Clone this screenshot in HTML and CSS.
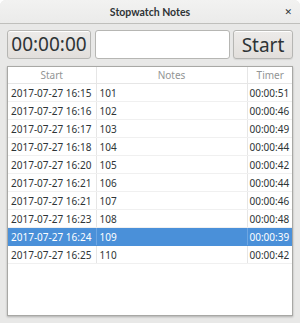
FILE: index.html
```html
<!DOCTYPE html>
<html lang="en">
<head>
  <meta charset="UTF-8" />
  <title>Stopwatch Notes</title>
  <link rel="stylesheet" href="styles.css">
</head>
<body>
  <div class="window">
    <div class="titlebar">
      <span class="title">Stopwatch Notes</span>
      <span class="close">&#x2715;</span>
    </div>

    <div class="toolbar">
      <div class="clock">00:00:00</div>
      <input class="note" type="text">
      <button class="start">Start</button>
    </div>

    <div class="list">
      <table id="notesTable">
        <colgroup>
          <col class="c-start">
          <col class="c-notes">
          <col class="c-timer">
        </colgroup>
        <thead>
          <tr><th>Start</th><th>Notes</th><th>Timer</th></tr>
        </thead>
        <tbody></tbody>
      </table>
    </div>
  </div>

  <script>
    const rows = [
      ['16:15', '101', '00:00:51'],
      ['16:16', '102', '00:00:46'],
      ['16:17', '103', '00:00:49'],
      ['16:18', '104', '00:00:44'],
      ['16:20', '105', '00:00:42'],
      ['16:21', '106', '00:00:44'],
      ['16:21', '107', '00:00:46'],
      ['16:23', '108', '00:00:48'],
      ['16:24', '109', '00:00:39'],
      ['16:25', '110', '00:00:42']
    ];

    const body = document.querySelector('#notesTable tbody');
    rows.forEach((r, i) => {
      const tr = document.createElement('tr');
      if (i === 8) tr.className = 'selected';
      [`2017-07-27 ${r[0]}`, r[1], r[2]].forEach(text => {
        const td = document.createElement('td');
        td.textContent = text;
        tr.appendChild(td);
      });
      body.appendChild(tr);
    });
  </script>
</body>
</html>
```

FILE: styles.css
```css
html, body {
  margin: 0;
  padding: 0;
  background: #fff;
}

body {
  font-family: "Noto Sans", "DejaVu Sans", sans-serif;
  color: #2e3436;
  width: 300px;
  height: 323px;
  overflow: hidden;
}

.window {
  display: flex;
  flex-direction: column;
  height: 323px;
  background: #e8e8e7;
  border-radius: 6px 6px 0 0;
  overflow: hidden;
}

.titlebar {
  height: 23px;
  flex: none;
  display: flex;
  align-items: center;
  justify-content: center;
  position: relative;
  background: linear-gradient(#f2f2f1, #ebebea);
  border-bottom: 1px solid #bfbfbc;
}

.title {
  font-family: Lato, "Noto Sans", sans-serif;
  font-size: 10.5px;
  font-weight: bold;
  color: #2e3436;
}

.close {
  position: absolute;
  right: 8px;
  top: 5px;
  font-size: 9px;
  font-weight: bold;
  color: #2e3436;
}

.toolbar {
  display: flex;
  height: 29px;
  margin: 6px 7px 0 7px;
}

.clock {
  width: 84px;
  box-sizing: border-box;
  border: 1px solid #b6b6b3;
  border-radius: 3px;
  background: linear-gradient(#edebe9, #e2dfdc);
  box-shadow: inset 0 1px #fff;
  font-size: 19px;
  line-height: 27px;
  text-align: center;
  color: #2e3436;
}

.note {
  width: 135px;
  box-sizing: border-box;
  margin: 0 3px 0 4px;
  border: 1px solid #b6b6b3;
  border-radius: 3px;
  background: #fff;
  padding: 0 6px;
  font: inherit;
  outline: none;
}

.start {
  width: 60px;
  box-sizing: border-box;
  border: 1px solid #b6b6b3;
  border-radius: 3px;
  background: linear-gradient(#edebe9, #e2dfdc);
  box-shadow: inset 0 1px #fff, 0 1px 1px rgba(0,0,0,0.08);
  font-family: inherit;
  font-size: 19px;
  color: #2e3436;
  padding: 0;
}

.list {
  margin: 7px 7px 0 7px;
  height: 250px;
  box-sizing: border-box;
  background: #fff;
  border: 1px solid #a8a8a5;
  box-shadow: 0 1px 2px rgba(0,0,0,0.25);
  overflow: hidden;
}

table {
  border-collapse: collapse;
  table-layout: fixed;
  width: 285px;
  font-size: 10px;
}

.c-start { width: 88px; }
.c-notes { width: 151px; }
.c-timer { width: 46px; }

th {
  height: 16px;
  padding: 0;
  font-weight: normal;
  color: #929595;
  text-align: center;
  border-bottom: 1px solid #e6e6e6;
  border-right: 1px solid #e6e6e6;
}

td {
  height: 17px;
  padding: 0 0 0 3px;
  white-space: nowrap;
  overflow: hidden;
  color: #2e3436;
  border-bottom: 1px solid #f0f0f0;
  border-right: 1px solid #e6e6e6;
}

td:last-child {
  padding-left: 2px;
}

th:last-child, td:last-child {
  border-right: none;
}

tr.selected td {
  background: #4a90d9;
  color: #fff;
  border-bottom-color: #4a90d9;
  border-right-color: #6ea6e2;
}
```
